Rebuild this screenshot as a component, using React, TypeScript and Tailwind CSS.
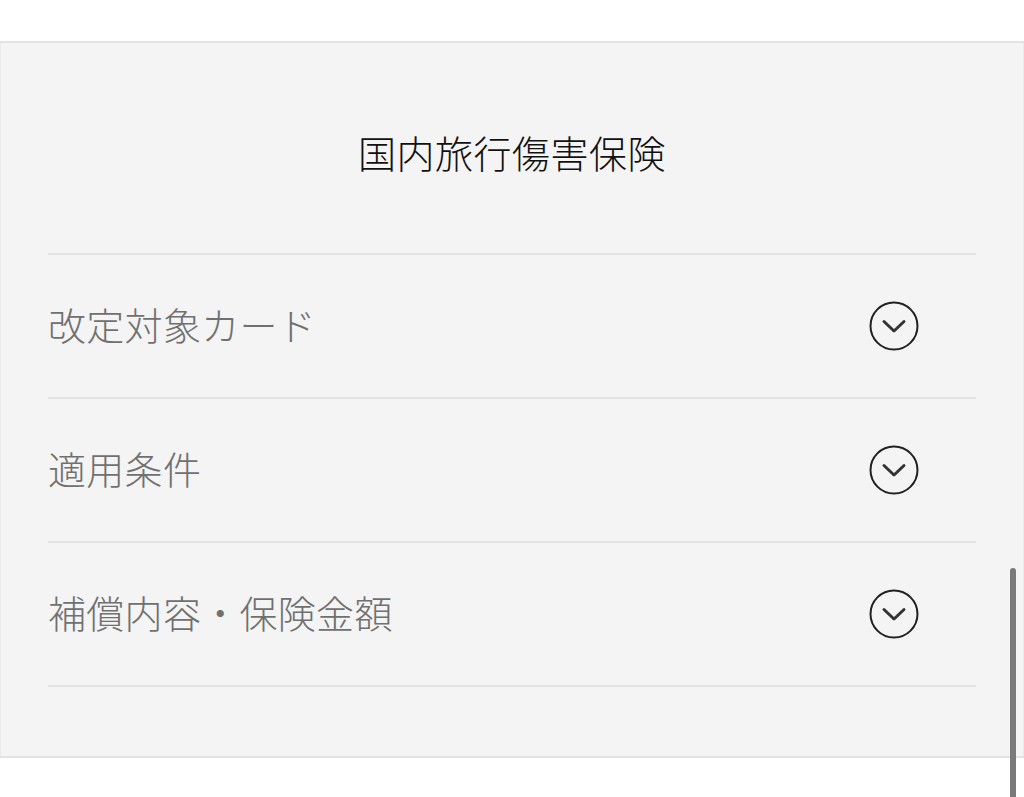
const items = ["改定対象カード", "適用条件", "補償内容・保険金額"];

function ChevronCircle() {
	return (
		<svg width="52" height="52" viewBox="0 0 52 52" fill="none">
			<circle cx="26" cy="26" r="23.5" stroke="#222" strokeWidth="2" />
			<path
				d="M16 21.5 L26 31 L36 21.5"
				stroke="#333"
				strokeWidth="3"
				strokeLinecap="round"
				strokeLinejoin="round"
			/>
		</svg>
	);
}

export default function App() {
	return (
		<div
			className="relative w-[1024px] h-[797px] overflow-hidden bg-white"
			style={{ fontFamily: '"Noto Sans CJK JP", "Noto Sans", sans-serif' }}
		>
			<div className="h-[41px]" />
			<section className="border-y-2 border-[#e3e3e3] bg-[#f4f4f4]">
				<div className="border-x border-[#ebebeb] pb-[69px]">
					<h2 className="pt-[89px] pb-[81px] text-center text-[38px] leading-[40px] font-light tracking-[0.5px] text-[#111]">
						国内旅行傷害保険
					</h2>
					<div className="mx-[47px] w-[928px] border-t-2 border-[#e2e2e2]">
						{items.map((label) => (
							<div
								key={label}
								className="flex h-[144px] items-center justify-between border-b-2 border-[#e2e2e2] pr-[56px]"
							>
								<span className="pb-[5px] text-[38px] leading-[40px] font-light tracking-[0.3px] text-[#707070]">
									{label}
								</span>
								<ChevronCircle />
							</div>
						))}
					</div>
				</div>
			</section>
			<div className="absolute left-[1010px] top-[568px] h-[240px] w-[6px] rounded-full bg-[#7a7a7a]" />
		</div>
	);
}
